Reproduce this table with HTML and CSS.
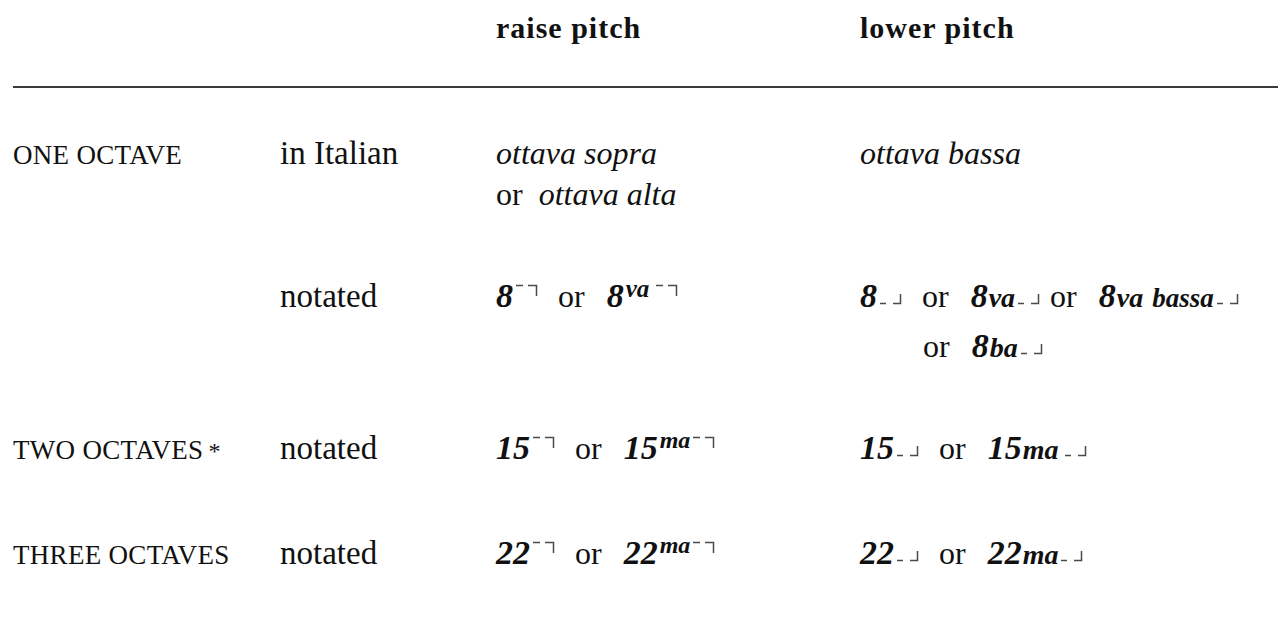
FILE: index.html
```html
<!DOCTYPE html>
<html>
<head>
<meta charset="utf-8">
<link rel="stylesheet" href="styles.css">
</head>
<body>
<div class="table">
  <div class="row head">
    <div></div>
    <div></div>
    <div>raise pitch</div>
    <div>lower pitch</div>
  </div>
  <div class="rule"></div>

  <div class="row r1">
    <div class="label">ONE OCTAVE</div>
    <div class="mode">in Italian</div>
    <div><div><i>ottava sopra</i></div><div>or&nbsp; <i>ottava alta</i></div></div>
    <div><i>ottava bassa</i></div>
  </div>

  <div class="row nrow r2">
    <div class="label"></div>
    <div class="mode">notated</div>
    <div class="notes"><span class="num">8</span><svg class="mk up" width="22" height="12" viewBox="0 0 22 12"><path d="M0 1.5H7M12 1.5H20.5V12"/></svg><span class="or">or</span><span class="num">8</span><span class="sup">va</span><svg class="mk up gap" width="22" height="12" viewBox="0 0 22 12"><path d="M0 1.5H7M12 1.5H20.5V12"/></svg></div>
    <div class="notes">
      <div><span class="num">8</span><svg class="mk dn" width="22" height="12" viewBox="0 0 22 12"><path d="M0 10.5H6M13 10.5H20.5V1"/></svg><span class="or">or</span><span class="num">8</span><span class="suf">va</span><svg class="mk dn" width="22" height="12" viewBox="0 0 22 12"><path d="M0 10.5H6M13 10.5H20.5V1"/></svg><span class="or tight">or</span><span class="num">8</span><span class="suf">va</span><span class="suf small">bassa</span><svg class="mk dn" width="22" height="12" viewBox="0 0 22 12"><path d="M0 10.5H6M13 10.5H20.5V1"/></svg></div>
      <div class="second"><span class="or first">or</span><span class="num">8</span><span class="suf">ba</span><svg class="mk dn" width="22" height="12" viewBox="0 0 22 12"><path d="M0 10.5H6M13 10.5H20.5V1"/></svg></div>
    </div>
  </div>

  <div class="row nrow r3">
    <div class="label">TWO OCTAVES<span class="ast">*</span></div>
    <div class="mode">notated</div>
    <div class="notes"><span class="num">15</span><svg class="mk up" width="22" height="12" viewBox="0 0 22 12"><path d="M0 1.5H7M12 1.5H20.5V12"/></svg><span class="or">or</span><span class="num">15</span><span class="sup ma">ma</span><svg class="mk up" width="22" height="12" viewBox="0 0 22 12"><path d="M0 1.5H7M12 1.5H20.5V12"/></svg></div>
    <div class="notes"><span class="num">15</span><svg class="mk dn" width="22" height="12" viewBox="0 0 22 12"><path d="M0 10.5H6M13 10.5H20.5V1"/></svg><span class="or">or</span><span class="num">15</span><span class="suf">ma</span><svg class="mk dn gap" width="22" height="12" viewBox="0 0 22 12"><path d="M0 10.5H6M13 10.5H20.5V1"/></svg></div>
  </div>

  <div class="row nrow r4">
    <div class="label">THREE OCTAVES</div>
    <div class="mode">notated</div>
    <div class="notes"><span class="num">22</span><svg class="mk up" width="22" height="12" viewBox="0 0 22 12"><path d="M0 1.5H7M12 1.5H20.5V12"/></svg><span class="or">or</span><span class="num">22</span><span class="sup ma">ma</span><svg class="mk up" width="22" height="12" viewBox="0 0 22 12"><path d="M0 1.5H7M12 1.5H20.5V12"/></svg></div>
    <div class="notes"><span class="num">22</span><svg class="mk dn" width="22" height="12" viewBox="0 0 22 12"><path d="M0 10.5H6M13 10.5H20.5V1"/></svg><span class="or">or</span><span class="num">22</span><span class="suf">ma</span><svg class="mk dn" width="22" height="12" viewBox="0 0 22 12"><path d="M0 10.5H6M13 10.5H20.5V1"/></svg></div>
  </div>
</div>
</body>
</html>
```

FILE: styles.css
```css
html, body {
  margin: 0;
  background: #ffffff;
}
body {
  font-family: "Liberation Serif", "Times New Roman", serif;
  color: #111111;
  width: 1278px;
  height: 627px;
  overflow: hidden;
}
.table {
  padding: 8px 0 0 13px;
}
.row {
  display: grid;
  grid-template-columns: 267px 216px 364px 1fr;
  align-items: baseline;
}
.head {
  font-weight: bold;
  font-size: 30px;
  line-height: 40px;
  letter-spacing: 1px;
}
.rule {
  height: 2px;
  background: #3c3c3c;
  margin-top: 38px;
}
.r1 {
  margin-top: 45px;
  font-size: 32px;
  line-height: 41px;
}
.label {
  font-size: 27px;
  letter-spacing: 0.3px;
  white-space: nowrap;
}
.ast {
  margin-left: 5px;
  font-size: 24px;
}
.mode {
  font-size: 33px;
}
.nrow {
  font-size: 32px;
  line-height: 40px;
}
.r2 { margin-top: 61px; }
.r3 { margin-top: 62px; }
.r4 { margin-top: 62px; }
.notes {
  white-space: nowrap;
}
.second {
  margin-top: 10px;
}
.num {
  font-weight: bold;
  font-style: italic;
  font-size: 34px;
  line-height: 1;
}
.sup {
  font-weight: bold;
  font-style: italic;
  font-size: 25px;
  line-height: 1;
  vertical-align: 10px;
  margin-left: 2px;
}
.sup.ma {
  font-size: 24px;
  vertical-align: 11px;
}
.suf {
  font-weight: bold;
  font-style: italic;
  font-size: 28px;
  line-height: 1;
  margin-left: 1px;
}
.suf.small {
  font-size: 27px;
  margin-left: 9px;
}
.or {
  margin: 0 22px 0 20px;
}
.or.tight {
  margin: 0 22px 0 10px;
}
.or.first {
  margin-left: 63px;
}
.mk {
  fill: none;
  stroke: #4a4a4a;
  stroke-width: 1.5;
  margin-left: 3px;
}
.mk.gap {
  margin-left: 7px;
}
.mk.up {
  vertical-align: 11px;
}
.mk.dn {
  vertical-align: 2px;
}
```
